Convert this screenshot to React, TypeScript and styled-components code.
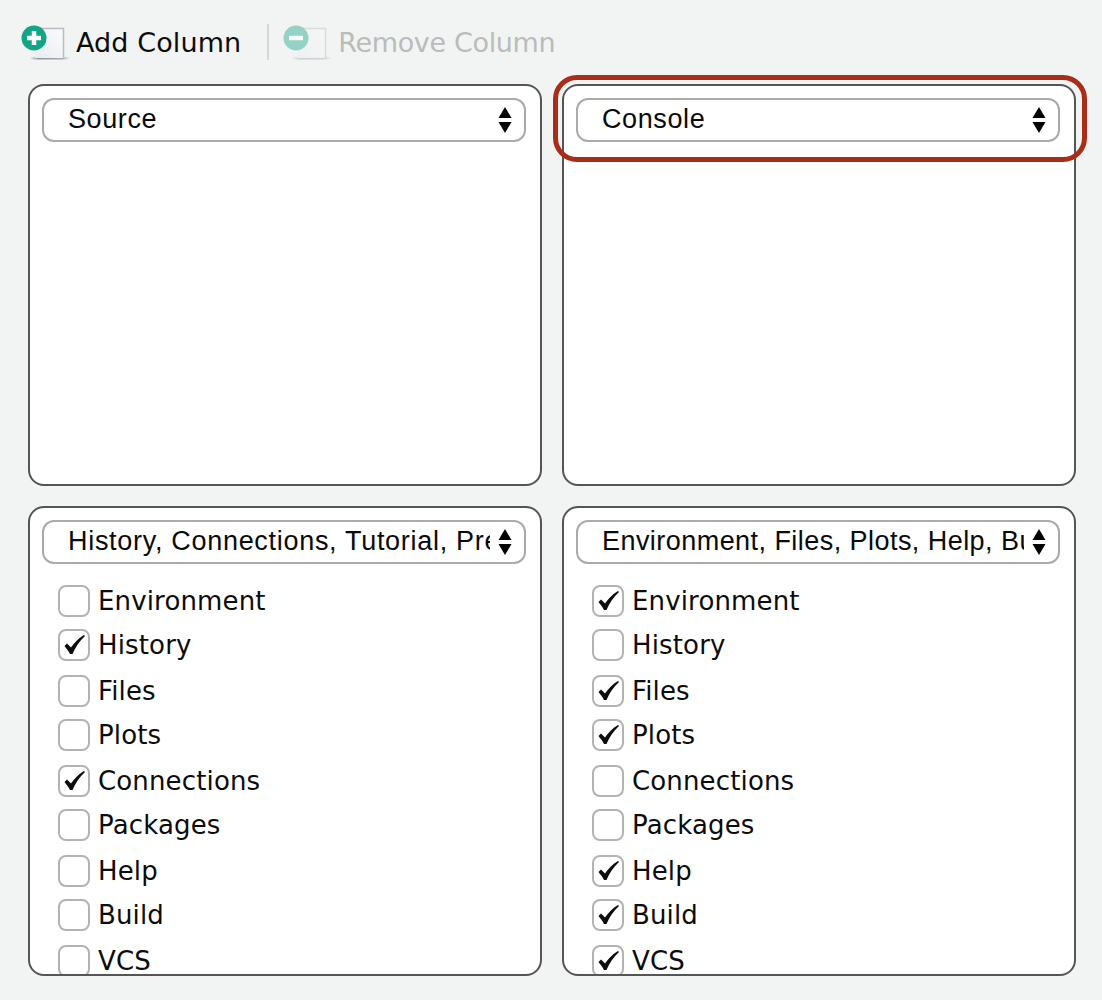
import React from "react";
import styled, { createGlobalStyle } from "styled-components";

const Global = createGlobalStyle`
  html, body { margin: 0; padding: 0; background: #f2f4f3; }
  body { font-family: "DejaVu Sans", sans-serif; }
`;

const Page = styled.div`
  position: relative;
  width: 1102px;
  height: 1000px;
  box-sizing: border-box;
  padding: 0 26px 0 28px;
  background: #f2f4f3;
  overflow: hidden;
`;

const Toolbar = styled.div`
  display: flex;
  align-items: center;
  height: 84px;
  margin-left: -6px;
  box-sizing: border-box;
`;

const ToolButton = styled.div<{ $disabled?: boolean }>`
  display: flex;
  align-items: center;
  gap: 6px;
  font-size: 27px;
  line-height: 36px;
  letter-spacing: ${(p) => (p.$disabled ? "-0.35px" : "0.1px")};
  color: ${(p) => (p.$disabled ? "#b9bcbb" : "#0c0c0c")};
`;

const ToolLabel = styled.span`
  padding-top: 2px;
`;

const ToolSeparator = styled.div`
  width: 2px;
  height: 36px;
  margin: 0 15px 0 26px;
  background: #d6d8d7;
`;

const IconSvg = styled.svg<{ $faded?: boolean }>`
  flex: none;
  overflow: visible;
  opacity: ${(p) => (p.$faded ? 0.42 : 1)};
  filter: blur(0.5px);
`;

const Grid = styled.div`
  display: grid;
  grid-template-columns: 514px 514px;
  grid-template-rows: 402px 470px;
  gap: 20px;
`;

const Panel = styled.div`
  position: relative;
  box-sizing: border-box;
  border: 2px solid #555;
  border-radius: 16px;
  background: #fff;
  padding: 12px 14px 0 12px;
  overflow: hidden;
`;

const Select = styled.div`
  display: flex;
  align-items: center;
  box-sizing: border-box;
  height: 44px;
  padding: 0 12px 0 24px;
  border: 2px solid #aaa;
  border-radius: 12px;
  background: #fff;
`;

const SelectText = styled.div<{ $tracking: number }>`
  flex: 1;
  min-width: 0;
  overflow: hidden;
  white-space: nowrap;
  padding-bottom: 2px;
  font-family: "Liberation Sans", Arial, sans-serif;
  font-size: 27px;
  letter-spacing: ${(p) => p.$tracking}px;
  color: #0a0a0a;
`;

const SelectArrows = styled.svg`
  flex: none;
  width: 14px;
  height: 26px;
  margin-left: 8px;
`;

const List = styled.div`
  display: flex;
  flex-direction: column;
  margin-top: 14px;
  padding-left: 16px;
`;

const Row = styled.div`
  display: flex;
  align-items: center;
  gap: 8px;
  height: 45px;
  flex: none;
  font-size: 26px;
  letter-spacing: 0.15px;
  color: #0c0c0c;

  &:nth-child(even) {
    margin: -1px 0 1px;
  }
`;

const Box = styled.div`
  flex: none;
  display: flex;
  align-items: center;
  justify-content: center;
  box-sizing: border-box;
  width: 32px;
  height: 32px;
  border: 2px solid #b3b3b3;
  border-radius: 8px;
  background: #fff;
`;

const Highlight = styled.div`
  position: absolute;
  left: 553px;
  top: 75px;
  width: 534px;
  height: 87px;
  box-sizing: border-box;
  border: 5px solid #a92d19;
  border-radius: 24px;
  pointer-events: none;
`;

const Arrows = () => (
  <SelectArrows viewBox="0 0 14 26">
    <path d="M7 0 L13.5 11 H0.5 Z" fill="#000" />
    <path d="M7 26 L13.5 15 H0.5 Z" fill="#000" />
  </SelectArrows>
);

const Check = () => (
  <svg width="21" height="19" viewBox="0 0 21 19">
    <path d="M0.5 11 L3 8.5 L7 12.5 C10 8 14 3.5 20 0 L21 1 C15.5 6 11.5 12 8.5 19 L6 19 C4.5 16 2.5 13.5 0.5 11 Z" fill="#0c0c0c" />
  </svg>
);

const ColumnIcon = ({ kind, faded }: { kind: "add" | "remove"; faded?: boolean }) => {
  const id = `shadow-${kind}`;
  const sheet = `sheet-${kind}`;
  return (
    <IconSvg width="48" height="40" viewBox="0 0 48 40" $faded={faded}>
      <defs>
        <linearGradient id={id} x1="0" x2="1" y1="0" y2="0">
          <stop offset="0" stopColor="#9aa0a6" stopOpacity="0" />
          <stop offset="0.2" stopColor="#8f969c" />
          <stop offset="0.8" stopColor="#a4aab0" />
          <stop offset="1" stopColor="#b9bec2" stopOpacity="0" />
        </linearGradient>
        <linearGradient id={sheet} x1="0" x2="1" y1="1" y2="0">
          <stop offset="0" stopColor="#e8ecf2" />
          <stop offset="1" stopColor="#fbfbfb" />
        </linearGradient>
      </defs>
      <rect x="8" y="35" width="40" height="2.5" fill={`url(#${id})`} />
      <path d="M13 6 H42 V36 H13 Z" fill={`url(#${sheet})`} />
      <path d="M13 6.5 H41.5 V36" fill="none" stroke="#b9bdc1" strokeWidth="1.5" />
      <circle cx="12" cy="16" r="12.5" fill="#12a585" />
      {kind === "add" && <path d="M12 9 V23 M5 16 H19" stroke="#fff" strokeWidth="4.5" />}
      {kind === "remove" && <path d="M5 16 H19" stroke="#fff" strokeWidth="4.5" />}
    </IconSvg>
  );
};

const names = ["Environment", "History", "Files", "Plots", "Connections", "Packages", "Help", "Build", "VCS"];

const PaneList = ({ checked }: { checked: string[] }) => (
  <List>
    {names.map((n) => (
      <Row key={n}>
        <Box>{checked.includes(n) && <Check />}</Box>
        {n}
      </Row>
    ))}
  </List>
);

const Dropdown = ({ value, tracking = 0.6 }: { value: string; tracking?: number }) => (
  <Select>
    <SelectText $tracking={tracking}>{value}</SelectText>
    <Arrows />
  </Select>
);

export default function App() {
  return (
    <Page>
      <Global />
      <Toolbar>
        <ToolButton>
          <ColumnIcon kind="add" />
          <ToolLabel>Add Column</ToolLabel>
        </ToolButton>
        <ToolSeparator />
        <ToolButton $disabled>
          <ColumnIcon kind="remove" faded />
          <ToolLabel>Remove Column</ToolLabel>
        </ToolButton>
      </Toolbar>
      <Grid>
        <Panel>
          <Dropdown value="Source" />
        </Panel>
        <Panel>
          <Dropdown value="Console" />
        </Panel>
        <Panel>
          <Dropdown value="History, Connections, Tutorial, Presentation" tracking={0.7} />
          <PaneList checked={["History", "Connections"]} />
        </Panel>
        <Panel>
          <Dropdown value="Environment, Files, Plots, Help, Build, VCS" tracking={0.45} />
          <PaneList checked={["Environment", "Files", "Plots", "Help", "Build", "VCS"]} />
        </Panel>
      </Grid>
      <Highlight />
    </Page>
  );
}
